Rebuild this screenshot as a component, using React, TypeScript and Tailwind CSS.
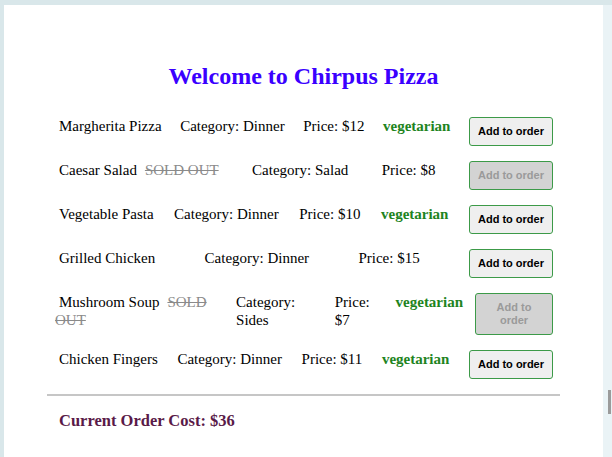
type Item = {
  name: string;
  category: string;
  price: number;
  soldOut?: boolean;
  vegetarian?: boolean;
};

const menu: Item[] = [
  { name: "Margherita Pizza", category: "Dinner", price: 12, vegetarian: true },
  { name: "Caesar Salad", category: "Salad", price: 8, soldOut: true },
  { name: "Vegetable Pasta", category: "Dinner", price: 10, vegetarian: true },
  { name: "Grilled Chicken", category: "Dinner", price: 15 },
  { name: "Mushroom Soup", category: "Sides", price: 7, soldOut: true, vegetarian: true },
  { name: "Chicken Fingers", category: "Dinner", price: 11, vegetarian: true },
];

function MenuRow({ item }: { item: Item }) {
  return (
    <div className="flex items-start justify-between gap-3 pl-[8px] pr-[7px]">
      <div className="indent-1">
        {item.name}
        {item.soldOut && (
          <span className="ml-2 text-[#8a8a8a] line-through">SOLD OUT</span>
        )}
      </div>
      <div>Category: {item.category}</div>
      <div>Price: ${item.price}</div>
      {item.vegetarian && (
        <div className="font-bold text-[#1e841e]">vegetarian</div>
      )}
      <button
        disabled={item.soldOut}
        className={
          item.soldOut
            ? "rounded-[3px] border border-[#3c9a48] bg-[#d3d3d3] px-[8px] py-[7px] font-['Liberation_Sans',Arial,sans-serif] text-[11px] leading-[13px] font-bold text-[#9a9a9a]"
            : "rounded-[3px] border border-[#3c9a48] bg-[#efefef] px-[8px] py-[7px] font-['Liberation_Sans',Arial,sans-serif] text-[11px] leading-[13px] font-bold text-black"
        }
      >
        Add to order
      </button>
    </div>
  );
}

export default function App() {
  return (
    <div className="flex h-[457px] flex-col overflow-hidden bg-[#d9e7ea] pt-[5px] font-['Liberation_Serif','Times_New_Roman',serif] text-[15px] leading-[18px] text-black">
      <div className="flex flex-1">
        <div className="ml-[4px] w-[599px] bg-white pt-[57px]">
          <h2 className="text-center text-[24px] leading-[28px] font-bold text-[#3a00ff]">
            Welcome to Chirpus Pizza
          </h2>

          <div className="mt-[27px] ml-[43px] w-[513px]">
            <div className="flex flex-col gap-[15px]">
              {menu.map((item) => (
                <MenuRow key={item.name} item={item} />
              ))}
            </div>
            <div className="mt-[15px] border-t-2 border-[#c6c6c6]" />
            <div className="mt-[15px] pl-[12px] text-[16.5px] leading-[19px] font-bold text-[#5a1a48]">
              Current Order Cost: $36
            </div>
          </div>
        </div>
        <div className="relative flex-1 bg-[#eaf3f6]">
          {/* scrollbar thumb */}
          <div className="absolute top-[385px] left-[5px] h-[24px] w-[3px] bg-[#9b9b9b]" />
        </div>
      </div>
    </div>
  );
}
